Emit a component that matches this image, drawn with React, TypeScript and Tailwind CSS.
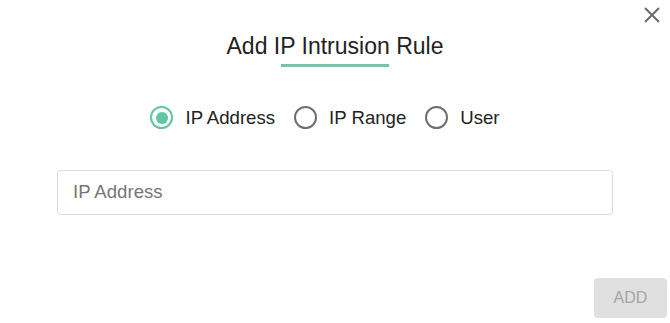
import { useState } from 'react'

const options = ['IP Address', 'IP Range', 'User']

function Radio({ checked, label, onClick }: { checked: boolean; label: string; onClick: () => void }) {
  return (
    <button type="button" onClick={onClick} className="flex items-center gap-[12px]">
      <span
        className={
          checked
            ? 'flex h-[23px] w-[23px] items-center justify-center rounded-full border-[2.5px] border-[#62c6a5]'
            : 'flex h-[23px] w-[23px] items-center justify-center rounded-full border-[2.5px] border-[#6f6f6f]'
        }
      >
        {checked && <span className="h-[12px] w-[12px] rounded-full bg-[#62c6a5]" />}
      </span>
      <span className="text-[18.6px] text-[#222]">{label}</span>
    </button>
  )
}

export default function App() {
  const [selected, setSelected] = useState('IP Address')

  return (
    <div
      className="relative flex h-[323px] w-[670px] flex-col bg-white"
      style={{ fontFamily: '"Liberation Sans", Arial, sans-serif' }}
    >
      <button type="button" className="absolute right-[8px] top-[5px] text-[#6b6b6b]">
        <svg width="20" height="20" viewBox="0 0 20 20" fill="none" stroke="currentColor" strokeWidth="2">
          <path d="M3 3L17 17M17 3L3 17" />
        </svg>
      </button>

      <div className="flex flex-col items-center pt-[32px]">
        <h2 className="text-[23px] leading-[28px] text-[#222]">Add IP Intrusion Rule</h2>
        <div className="mt-[4px] h-[3px] w-[108px] bg-[#6cc9a9]" />
      </div>

      <div className="mt-[37px] flex justify-center gap-[19px] pr-[20px]">
        {options.map((o) => (
          <Radio key={o} label={o} checked={selected === o} onClick={() => setSelected(o)} />
        ))}
      </div>

      <div className="mt-[38px] px-[57px]">
        <input
          placeholder="IP Address"
          className="h-[45px] w-full rounded-[4px] border border-[#dcdcdc] px-[15px] text-[18.6px] text-[#222] placeholder:text-[#757575] outline-none"
        />
      </div>

      <div className="mt-auto flex justify-end pb-[5px] pr-[3px]">
        <button
          type="button"
          disabled
          className="h-[40px] w-[73px] rounded-[4px] bg-[#e0e0e0] text-[16px] text-[#a6a6a6]"
        >
          ADD
        </button>
      </div>
    </div>
  )
}
